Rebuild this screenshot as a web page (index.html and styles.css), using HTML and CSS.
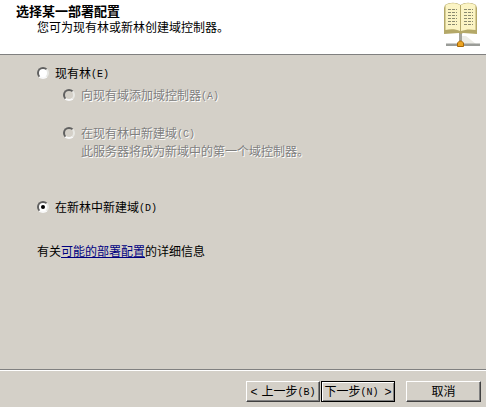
FILE: index.html
```html
<!DOCTYPE html>
<html lang="zh-CN">
<head>
    <meta charset="UTF-8">
    <title>选择某一部署配置</title>
    <link rel="stylesheet" href="styles.css">
</head>
<body>
    <div class="wizard">
        <div class="header">
            <div class="header-text">
                <div class="title">选择某一部署配置</div>
                <div class="subtitle">您可为现有林或新林创建域控制器。</div>
            </div>
            <svg class="book-icon" width="38" height="48" viewBox="0 0 38 48">
                <path d="M20 44h14l-10-8h-4z" fill="#ecece6"/>
                <rect x="4" y="43.500" width="34" height="2.500" fill="#9a9c98"/>
                <rect x="17" y="32" width="3" height="9" fill="#a4a49c"/>
                <path d="M15.500 46.500v-3.500l2-2h2l2 2v3.500z" fill="#eca422" stroke="#a86808"/>
                <path d="M2 8l1-3c5-3 11-3 15.500 0c4.500-3 10.500-3 15.500 0l1 3v26l-14-1-2 1-2-1-15 1z" fill="#b4a868"/>
                <path d="M3.500 5c5-2.500 10-2.500 14.500 0v26c-4-2-9-2.500-14.500-1zM19 5c4.500-2.500 9.500-2.500 14.500 0v25c-5.500-1-10.500-.5-14.500 1z" fill="#fbf4c4"/>
                <path d="M6 9.500h9M6 12.500h9M6 15.500h9M6 18.500h9M6 21.500h9M6 24.500h9M22 9.500h9M22 12.500h9M22 15.500h9M22 18.500h9M22 21.500h9M22 24.500h9" stroke="#8a8a70" stroke-dasharray="3 1"/>
            </svg>
        </div>
        <div class="content">
            <div class="option">
                <span class="radio"></span>
                <span>现有林<span class="key">(E)</span></span>
            </div>
            <div class="option sub disabled">
                <span class="radio"></span>
                <span>向现有域添加域控制器<span class="key">(A)</span></span>
            </div>
            <div class="option sub second disabled">
                <span class="radio"></span>
                <span>在现有林中新建域<span class="key">(C)</span><br>此服务器将成为新域中的第一个域控制器。</span>
            </div>
            <div class="option new-forest">
                <span class="radio checked"></span>
                <span>在新林中新建域<span class="key">(D)</span></span>
            </div>
            <p class="info">有关<a href="#">可能的部署配置</a>的详细信息</p>
        </div>
        <div class="footer">
            <button class="btn back"><span class="arrow">&lt;</span>上一步<span class="key">(B)</span></button>
            <button class="btn next">下一步<span class="key">(N)</span><span class="arrow">&gt;</span></button>
            <button class="btn cancel">取消</button>
        </div>
    </div>
</body>
</html>
```

FILE: styles.css
```css
body {
    margin: 0;
    background-color: #d4d0c8;
    font-family: "Noto Sans CJK SC", "Liberation Sans", sans-serif;
    font-size: 12px;
    line-height: 18px;
    color: #000;
}
.wizard {
    width: 486px;
    height: 407px;
    display: flex;
    flex-direction: column;
    overflow: hidden;
}
.header {
    height: 54px;
    flex: none;
    background-color: #fff;
    border-bottom: 1px solid #808080;
    display: flex;
    justify-content: space-between;
    padding-left: 16px;
    padding-right: 6px;
    line-height: 16px;
}
.header-text {
    padding-top: 3px;
}
.title {
    font-size: 13px;
    font-weight: bold;
}
.subtitle {
    padding-left: 21px;
}
.content {
    flex: 1;
    padding: 9px 0 0 37px;
}
.option {
    display: flex;
    gap: 6px;
}
.option .radio {
    margin-top: 3px;
}
.sub {
    margin-top: 4px;
    margin-left: 26px;
}
.second {
    margin-top: 20px;
}
.new-forest {
    margin-top: 38px;
}
.disabled {
    color: #808080;
    text-shadow: 1px 1px 0 #fff;
}
.key {
    font-family: "Liberation Mono", monospace;
    font-size: 10px;
    line-height: 0;
    vertical-align: 1px;
}
.arrow {
    font-family: "Liberation Sans", sans-serif;
    line-height: 0;
}
.back .arrow {
    margin-right: 4px;
}
.next .arrow {
    margin-left: 6px;
}
.radio {
    width: 12px;
    height: 12px;
    flex: none;
    box-sizing: border-box;
    border-radius: 50%;
    background-color: #fff;
    border: 2px solid;
    border-color: #606060 #e8e8e4 #f8f8f8 #606060;
    display: flex;
    align-items: center;
    justify-content: center;
}
.disabled .radio {
    background-color: #d4d0c8;
}
.checked::after {
    content: "";
    width: 4px;
    height: 4px;
    border-radius: 50%;
    background-color: #000;
}
.info {
    margin: 26px 0 0;
}
.info a {
    color: #000080;
}
.footer {
    height: 26px;
    flex: none;
    border-top: 1px solid #808080;
    box-shadow: inset 0 1px 0 #fff;
    display: flex;
    padding: 11px 5px 0 246px;
}
.btn {
    height: 21px;
    box-sizing: border-box;
    padding: 0 0 2px;
    font: inherit;
    line-height: 16px;
    color: #000;
    background-color: #d4d0c8;
    border: 1px solid;
    border-color: #fff #404040 #404040 #fff;
    box-shadow: inset -1px -1px 0 #808080;
}
.back {
    width: 74px;
}
.next {
    width: 74px;
    margin-left: 1px;
    border-color: #000;
    box-shadow: inset 1px 1px 0 #fff, inset -1px -1px 0 #808080;
}
.cancel {
    width: 75px;
    margin-left: 11px;
}
```
